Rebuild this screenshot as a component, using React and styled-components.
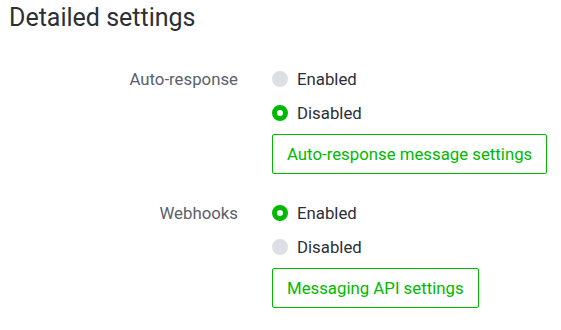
import React, { useState } from "react";
import styled, { createGlobalStyle } from "styled-components";

const GlobalStyle = createGlobalStyle`
    body {
        margin: 0;
        background: #fff;
        font-family: Roboto, "Liberation Sans", sans-serif;
    }
`;

const Page = styled.div`
    width: 561px;
    height: 330px;
    padding: 3px 0 0 9px;
    box-sizing: border-box;
`;

const Title = styled.h2`
    margin: 0;
    font-size: 25px;
    font-weight: 400;
    color: #2b2f36;
    line-height: 30px;
`;

const Sections = styled.div`
    display: flex;
    flex-direction: column;
    gap: 22px;
    margin-top: 29px;
`;

const Section = styled.div`
    display: grid;
    grid-template-columns: 229px auto;
    column-gap: 34px;
`;

const Label = styled.div`
    text-align: right;
    font-size: 16.8px;
    color: #5b606a;
    line-height: 34px;
`;

const Options = styled.div`
    display: flex;
    flex-direction: column;
    align-items: flex-start;
`;

const Option = styled.label`
    display: flex;
    align-items: center;
    gap: 9px;
    height: 34px;
    font-size: 16.8px;
    color: #2b2f36;
    cursor: pointer;
`;

const Dot = styled.span`
    width: 16px;
    height: 16px;
    border-radius: 50%;
    box-sizing: border-box;
    background: ${(p) => (p.checked ? "#fff" : "#dcdfe5")};
    border: ${(p) => (p.checked ? "5px solid #00b900" : "none")};
`;

const Button = styled.button`
    margin-top: 4px;
    height: 40px;
    padding: 0 14px;
    border: 1px solid #00b900;
    border-radius: 2px;
    background: #fff;
    color: #00b900;
    font-family: inherit;
    font-size: 16.8px;
    cursor: pointer;
`;

function Setting({ label, value, onChange, action }) {
    return (
        <Section>
            <Label>{label}</Label>
            <Options>
                {["Enabled", "Disabled"].map((opt) => (
                    <Option key={opt} onClick={() => onChange(opt)}>
                        <Dot checked={value === opt} />
                        {opt}
                    </Option>
                ))}
                <Button>{action}</Button>
            </Options>
        </Section>
    );
}

export default function App() {
    const [auto, setAuto] = useState("Disabled");
    const [hooks, setHooks] = useState("Enabled");
    return (
        <Page>
            <GlobalStyle />
            <Title>Detailed settings</Title>
            <Sections>
                <Setting
                    label="Auto-response"
                    value={auto}
                    onChange={setAuto}
                    action="Auto-response message settings"
                />
                <Setting
                    label="Webhooks"
                    value={hooks}
                    onChange={setHooks}
                    action="Messaging API settings"
                />
            </Sections>
        </Page>
    );
}
